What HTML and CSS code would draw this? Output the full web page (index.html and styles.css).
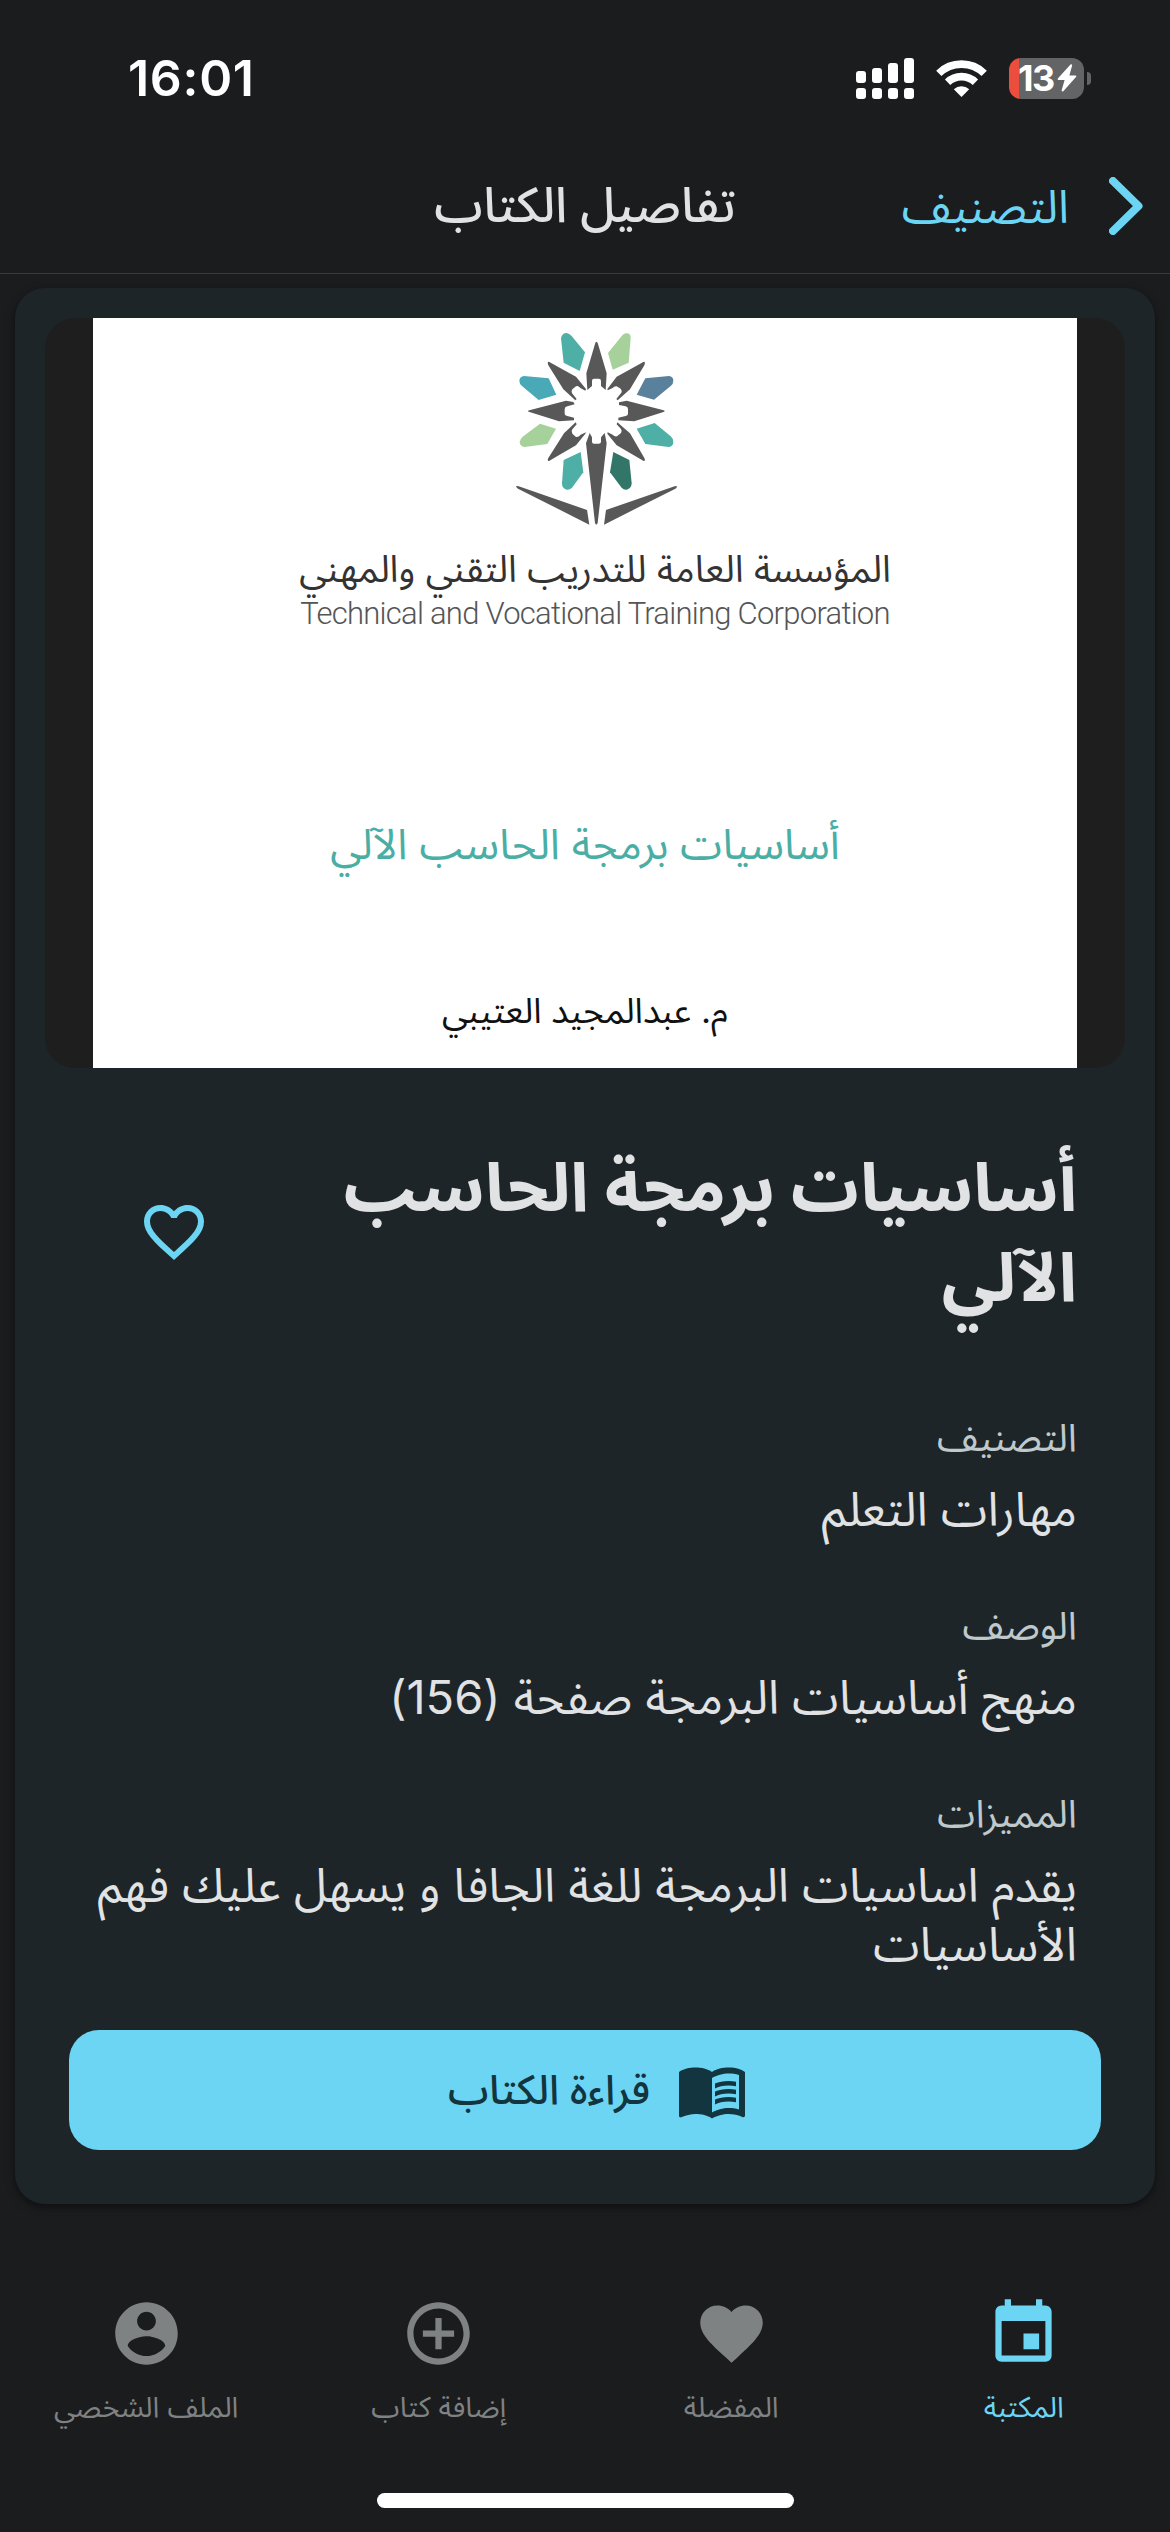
FILE: index.html
```html
<!DOCTYPE html>
<html lang="ar" dir="rtl">
<head>
<meta charset="utf-8">
<title>تفاصيل الكتاب</title>
<link rel="stylesheet" href="styles.css">
</head>
<body>
<div class="status" dir="ltr">
  <span class="clock">16:01</span>
  <div class="status-icons">
    <svg class="signal" viewBox="0 0 58 41" fill="#fff">
      <rect x="0" y="13" width="10" height="12" rx="3"/><rect x="16" y="10" width="10" height="15" rx="3"/><rect x="32" y="5" width="10" height="20" rx="3"/><rect x="48" y="0" width="10" height="25" rx="3"/>
      <rect x="0" y="30" width="10" height="11" rx="3"/><rect x="16" y="30" width="10" height="11" rx="3"/><rect x="32" y="30" width="10" height="11" rx="3"/><rect x="48" y="30" width="10" height="11" rx="3"/>
    </svg>
    <svg class="wifi" viewBox="0 0 51 37" fill="none" stroke="#fff" stroke-width="7.6">
      <path d="M2.8 13.4A32.5 32.5 0 0 1 48.2 13.4"/>
      <path d="M11.6 22.2A20 20 0 0 1 39.4 22.2"/>
      <path d="M25.5 37L17.8 29.2A11.2 11.2 0 0 1 33.2 29.2Z" fill="#fff" stroke="none"/>
    </svg>
    <div class="battery">
      <div class="battery-body"><span class="battery-level">13</span>
        <svg class="bolt" viewBox="0 0 20 28" fill="#fff"><path d="M13.5 .5L.8 14.6Q.2 16 1.6 16H7.6L4.6 26.5Q5 28.2 6.3 27.2L19.2 12.8Q19.8 11.4 18.4 11.4H12.4L15.2 1.3Q14.8 0 13.5 .5Z"/></svg>
      </div>
      <span class="battery-nub"></span>
    </div>
  </div>
</div>

<header class="appbar">
  <a class="back">
    <svg class="chevron" viewBox="0 0 34 58"><path d="M4 4L29.5 29L4 54"/></svg>
    <span>التصنيف</span>
  </a>
  <h1 class="appbar-title">تفاصيل الكتاب</h1>
</header>

<main class="card">
  <div class="cover-frame">
    <div class="cover">
      <svg class="logo" viewBox="0 24 690 696">
        <g fill="#585858">
          <g id="rays">
            <path d="M349 95Q353 96 354 102L380 190L377 240L363 228V212Q363 206 356 206H342Q336 206 336 212V228L322 240L319 190L345 102Q346 96 349 95Z"/>
            <path d="M494 156Q496 158 493 166L450 238L413 271L409 267L424 248Q427 242 422 236L410 229Q403 228 398 234L383 241L382 237L410 200L486 158Q492 154 494 156Z"/>
            <path d="M554 303Q554 306 548 307L463 334L415 331V323L437 318Q444 317 444 311V297Q444 291 437 289L417 285V277L440 272L548 300Q554 301 554 303Z"/>
            <path d="M494 452Q491 454 486 450L410 406L382 371L383 367L398 374Q404 381 411 379L423 369Q427 363 423 357L410 343L412 337L450 370L493 444Q496 449 494 452Z"/>
            <path d="M204 452Q207 454 212 450L288 406L316 371L318 367L302 374Q295 383 288 381L277 371Q272 365 277 358L290 343L287 337L252 370L205 444Q202 449 204 452Z"/>
            <path d="M144 303Q144 306 151 307L237 334L282 331V323L262 318Q254 317 254 311V297Q254 291 262 289L284 283L280 276L258 272L151 300Q144 301 144 303Z"/>
            <path d="M204 156Q202 158 205 166L250 238L286 271L290 267L276 250Q272 244 277 238L288 229Q294 226 301 234L316 242L318 237L288 200L212 158Q206 154 204 156Z"/>
          </g>
          <path d="M329 369L336 382V395Q336 401 342 401H356Q363 401 363 395V382L374 369L380 400L353 639Q349 648 345 639L318 400Z"/>
          <path d="M109 528L116 529L321 600L328 644L114 536Q107 532 109 528Z"/>
          <path d="M590 528L584 529L378 600L372 644L586 536Q592 532 590 528Z"/>
        </g>
        <path fill="#4dafa6" d="M243 85Q246 69 260 69Q268 70 275 78L315 127L299 183L251 158Z"/>
        <path fill="#a7d19b" d="M452 85Q453 69 438 70Q431 70 425 78L384 129L398 179L446 158Z"/>
        <path fill="#49a9b7" d="M132 198Q119 200 118 212Q118 222 126 228L176 270L229 254L206 205Z"/>
        <path fill="#5a819b" d="M567 198Q580 200 580 212Q580 222 572 228L522 269L470 254L496 205Z"/>
        <path fill="#a7d19b" d="M134 411Q120 410 119 396Q120 387 128 380L180 341L228 356L202 402Z"/>
        <path fill="#4dafa6" d="M566 411Q580 410 580 396Q580 386 572 379L524 339L470 356L496 402Z"/>
        <path fill="#4dafa6" d="M260 539Q246 536 246 520L251 450L302 426L310 487L276 533Q269 540 260 539Z"/>
        <path fill="#32766a" d="M440 539Q454 536 455 520L448 450L400 426L390 487L425 533Q431 540 440 539Z"/>
      </svg>
      <p class="org">المؤسسة العامة للتدريب التقني والمهني</p>
      <p class="org-en" dir="ltr">Technical and Vocational Training Corporation</p>
      <p class="cover-title">أساسيات برمجة الحاسب الآلي</p>
      <p class="author">م. عبدالمجيد العتيبي</p>
    </div>
  </div>

  <div class="title-row">
    <h2 class="title">أساسيات برمجة الحاسب الآلي</h2>
    <svg class="heart" viewBox="0 0 24 24"><path d="M16.5 3c-1.74 0-3.41.81-4.5 2.09C10.91 3.81 9.24 3 7.5 3 4.42 3 2 5.42 2 8.5c0 3.78 3.4 6.86 8.55 11.54L12 21.35l1.45-1.32C18.6 15.36 22 12.28 22 8.5 22 5.42 19.58 3 16.5 3zm-4.4 15.55l-.1.1-.1-.1C7.14 14.24 4 11.39 4 8.5 4 6.5 5.5 5 7.5 5c1.54 0 3.04.99 3.57 2.36h1.87C13.46 5.99 14.96 5 16.5 5c2 0 3.5 1.5 3.5 3.5 0 2.89-3.14 5.74-7.9 10.05z"/></svg>
  </div>

  <dl class="facts">
    <div class="fact"><dt>التصنيف</dt><dd>مهارات التعلم</dd></div>
    <div class="fact"><dt>الوصف</dt><dd>منهج أساسيات البرمجة صفحة (156)</dd></div>
    <div class="fact"><dt>المميزات</dt><dd>يقدم اساسيات البرمجة للغة الجافا و يسهل عليك فهم الأساسيات</dd></div>
  </dl>

  <button class="read">
    <svg class="book" viewBox="0 0 24 24"><path d="M21 5c-1.11-.35-2.33-.5-3.5-.5-1.95 0-4.05.4-5.5 1.5-1.45-1.1-3.55-1.5-5.5-1.5S2.45 4.9 1 6v14.65c0 .25.25.5.5.5.1 0 .15-.05.25-.05C3.1 20.45 5.05 20 6.5 20c1.95 0 4.05.4 5.5 1.5 1.35-.85 3.8-1.5 5.5-1.5 1.65 0 3.35.3 4.75 1.05.1.05.15.05.25.05.25 0 .5-.25.5-.5V6c-.6-.45-1.25-.75-2-1zm0 13.5c-1.1-.35-2.3-.5-3.5-.5-1.7 0-4.15.65-5.5 1.5V8c1.35-.85 3.8-1.5 5.5-1.5 1.2 0 2.4.15 3.5.5v11.5z"/><path d="M17.5 10.5c.88 0 1.73.09 2.5.26V9.24c-.79-.15-1.64-.24-2.5-.24-1.7 0-3.24.29-4.5.83v1.66c1.13-.64 2.7-.99 4.5-.99zM13 12.49v1.66c1.13-.64 2.7-.99 4.5-.99.88 0 1.73.09 2.5.26V11.9c-.79-.15-1.64-.24-2.5-.24-1.7 0-3.24.3-4.5.83zM17.5 14.33c-1.7 0-3.24.29-4.5.83v1.66c1.13-.64 2.7-.99 4.5-.99.88 0 1.73.09 2.5.26v-1.52c-.79-.16-1.64-.24-2.5-.24z"/></svg>
    <span>قراءة الكتاب</span>
  </button>
</main>

<nav class="tabs">
  <a class="tab active"><svg viewBox="0 0 24 24"><path d="M17 12h-5v5h5v-5zM16 1v2H8V1H6v2H5c-1.11 0-1.99.9-1.99 2L3 19c0 1.1.89 2 2 2h14c1.1 0 2-.9 2-2V5c0-1.1-.9-2-2-2h-1V1h-2zm3 18H5V8h14v11z"/></svg><span>المكتبة</span></a>
  <a class="tab"><svg viewBox="0 0 24 24"><path d="M12 21.35l-1.45-1.32C5.4 15.36 2 12.28 2 8.5 2 5.42 4.42 3 7.5 3c1.74 0 3.41.81 4.5 2.09C13.09 3.81 14.76 3 16.5 3 19.58 3 22 5.42 22 8.5c0 3.78-3.4 6.86-8.55 11.54L12 21.35z"/></svg><span>المفضلة</span></a>
  <a class="tab"><svg viewBox="0 0 24 24"><path d="M13 7h-2v4H7v2h4v4h2v-4h4v-2h-4V7zm-1-5C6.48 2 2 6.48 2 12s4.48 10 10 10 10-4.48 10-10S17.52 2 12 2zm0 18c-4.41 0-8-3.59-8-8s3.59-8 8-8 8 3.59 8 8-3.59 8-8 8z"/></svg><span>إضافة كتاب</span></a>
  <a class="tab"><svg viewBox="0 0 24 24"><path d="M12 2C6.48 2 2 6.48 2 12s4.48 10 10 10 10-4.48 10-10S17.52 2 12 2zm0 3c1.66 0 3 1.34 3 3s-1.34 3-3 3-3-1.34-3-3 1.34-3 3-3zm0 14.2c-2.5 0-4.71-1.28-6-3.22.03-1.99 4-3.08 6-3.08 1.99 0 5.97 1.09 6 3.08-1.29 1.94-3.5 3.22-6 3.22z"/></svg><span>الملف الشخصي</span></a>
</nav>
<div class="home-indicator"></div>
</body>
</html>
```
FILE: styles.css
```css
* { box-sizing: border-box; margin: 0; padding: 0; }

body {
  width: 1170px;
  height: 2532px;
  display: flex;
  flex-direction: column;
  background: #1b1c1e;
  color: #e1e2e4;
  font-family: Inter, "Noto Sans Arabic", "DejaVu Sans", sans-serif;
  overflow: hidden;
}

svg { display: block; flex: none; }

/* status bar */
.status {
  height: 141px;
  padding: 15px 79px 0 128px;
  display: flex;
  justify-content: space-between;
  align-items: center;
  color: #fff;
}
.clock { font-size: 50px; font-weight: 600; letter-spacing: .7px; }
.status-icons { display: flex; align-items: center; gap: 22px; }
.signal { width: 58px; height: 41px; }
.wifi { width: 51px; height: 37px; }
.battery { display: flex; align-items: center; gap: 3px; }
.battery-body {
  width: 75px;
  height: 41px;
  padding-left: 9px;
  display: flex;
  align-items: center;
  border-radius: 12px;
  background: linear-gradient(90deg, #eb4e3d 10px, #636466 10px);
}
.battery-level { width: 39px; font-size: 36px; font-weight: 700; line-height: 41px; letter-spacing: -1.5px; white-space: nowrap; }
.bolt { width: 20px; height: 28px; }
.battery-nub { width: 4px; height: 13px; border-radius: 0 4px 4px 0; background: #636466; }

/* app bar */
.appbar {
  height: 133px;
  padding: 0 27px 2px;
  display: grid;
  grid-template-columns: 1fr auto 1fr;
  align-items: center;
  border-bottom: 1px solid #3a3b3d;
}
.back { display: flex; align-items: center; gap: 40px; font-size: 46px; line-height: 60px; color: #6cd5f4; }
.chevron { width: 34px; height: 58px; fill: none; stroke: #6cd5f4; stroke-width: 8; stroke-linecap: round; stroke-linejoin: round; }
.appbar-title { padding-bottom: 2px; font-size: 49px; font-weight: 500; line-height: 60px; }

/* book card */
.card {
  margin: 14px 15px 0;
  padding: 30px 30px 54px;
  height: 1916px;
  display: flex;
  flex-direction: column;
  flex: none;
  border-radius: 30px;
  background: #1d2528;
  box-shadow: 0 3px 9px rgba(0, 0, 0, .5);
}
.cover-frame { height: 750px; flex: none; padding: 0 48px; border-radius: 30px; background: #1e1e1f; }
.cover { height: 750px; display: flex; flex-direction: column; align-items: center; background: #fff; }
.logo { width: 230px; height: 232px; margin-left: 20px; }
.cover p { white-space: nowrap; }
.org { margin-top: -1px; padding-left: 20px; font-size: 37.3px; line-height: 40px; color: #333; }
.org-en { margin-top: 5px; padding-left: 21px; font: 300 31px/40px Roboto, sans-serif; letter-spacing: -.74px; color: #555; }
.cover-title { margin-top: 180px; font-size: 42.5px; line-height: 60px; color: #4aaea5; }
.author { margin-top: 111px; font-size: 35px; line-height: 50px; color: #111; }
.cover .org, .cover .org-en { margin-left: 20px; padding-left: 0; }

.title-row { margin-top: 74px; padding: 0 48px 0 93px; display: flex; justify-content: space-between; align-items: center; }
.title { width: 800px; font-size: 67.5px; font-weight: 700; line-height: 90px; }
.heart { width: 72px; height: 72px; fill: #6cd5f4; }

.facts { margin-top: 91px; padding: 0 48px; display: flex; flex-direction: column; gap: 63px; }
.fact { display: flex; flex-direction: column; gap: 18px; }
dt { font-size: 38.5px; line-height: 48px; color: #bfc8cb; }
dd { font-size: 47px; line-height: 59px; }

.read {
  margin: auto 24px 0;
  height: 120px;
  padding-left: 26px;
  display: flex;
  justify-content: center;
  align-items: center;
  gap: 26px;
  border: 0;
  border-radius: 30px;
  background: #6cd5f4;
  color: #12353f;
  font: 500 41px/50px Inter, "Noto Sans Arabic", sans-serif;
}
.read span { margin-top: -3px; }
.book { width: 72px; height: 72px; fill: #12353f; }

/* bottom navigation */
.tabs { margin-top: 92px; display: grid; grid-template-columns: repeat(4, 1fr); }
.tab { display: flex; flex-direction: column; align-items: center; gap: 18px; font-size: 28.7px; line-height: 36px; color: #7f8283; }
.tab svg { width: 75px; height: 75px; fill: currentColor; }
.tab.active { color: #6cd5f4; }
.home-indicator { width: 417px; height: 15px; margin: 68px auto 0; border-radius: 8px; background: #fff; }
```
